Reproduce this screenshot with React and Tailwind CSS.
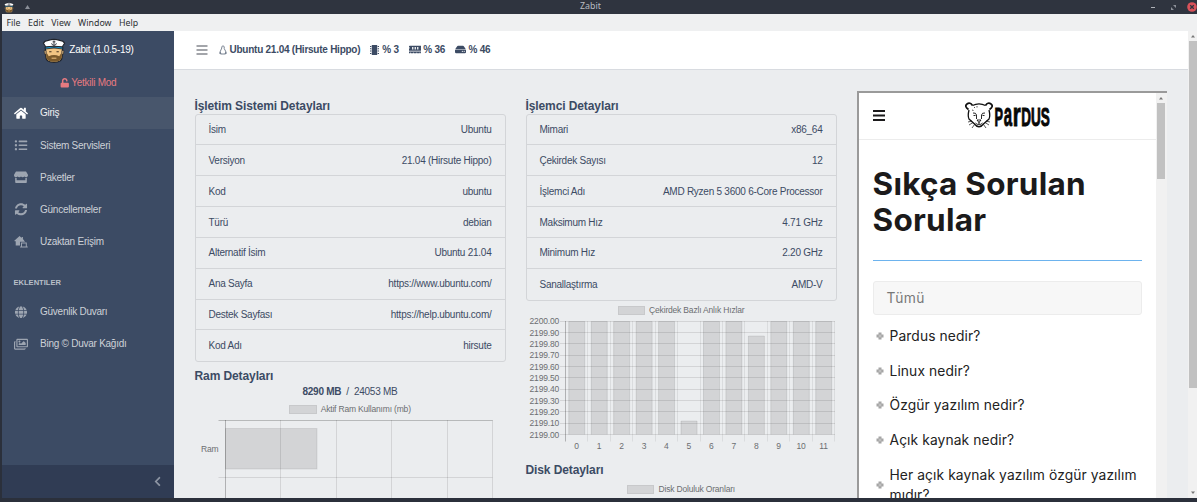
import React from "react";
import { FaHome, FaListUl, FaStore, FaSyncAlt, FaGlobe, FaRegImages, FaChevronLeft, FaUnlock, FaMemory, FaHdd } from "react-icons/fa";

function Captain({ className }) {
  return (
    <svg className={className} viewBox="0 0 24 26">
      <path d="M3 10 L3.500 20 Q4 25.300 12 25.300 Q20 25.300 20.500 20 L21 10Z" fill="#f2c583" stroke="#20242c" strokeWidth="1.300" />
      <path d="M1.700 13h2v4h-1.500ZM22.300 13h-2v4h1.500Z" fill="#f2c583" stroke="#20242c" strokeWidth=".7" />
      <path d="M3.900 16.500 5 16.500 6.500 19 Q12 16.500 17.500 19 L19 16.500h1.100L20 20.500Q19 24.800 12 24.800 Q5 24.800 4 20.500Z" fill="#7b5a2c" />
      <path d="M9.500 21h5" stroke="#f2c583" strokeWidth="1" />
      <path d="M7 14.300h2.400M14.600 14.300H17" stroke="#3a2c1c" strokeWidth="1" />
      <path d="M3 8.500h18v3q-9-2.500-18 0Z" fill="#1b9ad2" stroke="#20242c" strokeWidth=".8" />
      <path d="M1 5.500 Q2 3 6 2.500 Q12 .3 18 2.500 Q22 3 23 5.500 L20.500 9.300 Q12 7.800 3.500 9.300Z" fill="#fff" stroke="#20242c" strokeWidth="1.200" />
      <path d="M12 2.500v5M10.500 4h3M9.500 5.500q.5 2.200 2.500 2.200t2.500-2.200" fill="none" stroke="#20242c" strokeWidth=".9" />
    </svg>
  );
}

function RemoteHome({ className }) {
  return (
    <svg className={className} viewBox="0 0 14 13" fill="currentColor">
      <path d="M5.500 0 0 5l.8.800L1.500 5.200V10H6V6h5.200L9 3.200V1H7.700v1Z" />
      <path fillRule="evenodd" d="M7 6.800h6v4.200h1v1H6v-1h1Zm1 1V11h4V7.800Z" />
    </svg>
  );
}

const nav = [
  ["Giriş", FaHome, true],
  ["Sistem Servisleri", FaListUl],
  ["Paketler", FaStore],
  ["Güncellemeler", FaSyncAlt],
  ["Uzaktan Erişim", RemoteHome],
];
const plugins = [
  ["Güvenlik Duvarı", FaGlobe],
  ["Bing © Duvar Kağıdı", FaRegImages],
];

function NavItem({ item: [label, Icon, active] }) {
  return (
    <div className={"flex h-[32.200px] items-center pl-[12px] " + (active ? "bg-[#48566c] text-white" : "text-[#9da5b1]")}>
      <Icon className="h-[12.500px] w-[14px]" />
      <span className={"ml-[12px] pt-[0.500px] " + (active ? "text-[#f0f1f3]" : "text-[#cdd1d7]")}>{label}</span>
    </div>
  );
}

function Sidebar() {
  return (
    <aside className="flex w-[172px] shrink-0 flex-col bg-[#3c4b64]">
      <div className="flex h-[38px] items-center justify-center gap-[3px] text-white">
        <Captain className="h-[25px] w-[24px]" />
        <span>Zabit (1.0.5-19)</span>
      </div>
      <div className="flex h-[28px] items-center justify-center gap-[2px] text-[#e77a80]">
        <FaUnlock className="h-[9.500px] w-[9.500px]" />
        <span>Yetkili Mod</span>
      </div>
      {nav.map((n) => <NavItem key={n[0]} item={n} />)}
      <div className="flex h-[38px] items-center pt-[12px] pl-[11.500px] text-[7.550px] font-bold tracking-normal text-[#b9bfc8]">EKLENTILER</div>
      {plugins.map((n) => <NavItem key={n[0]} item={n} />)}
      <div className="mt-auto flex h-[33.500px] items-center justify-end bg-[#303c54] pr-[12px] text-[#8d95a3]">
        <FaChevronLeft className="h-[11px] w-[9px]" />
      </div>
    </aside>
  );
}

function Header() {
  return (
    <header className="flex h-[38.500px] shrink-0 items-center border-b border-[#d8dbe0] bg-white pl-[22px] font-bold text-[#3c4b64]">
      <svg className="h-[10px] w-[12px]" viewBox="0 0 12 10"><path d="M.5 1h11M.5 5h11M.5 9h11" stroke="#85888f" strokeWidth="1.600" /></svg>
      <svg className="ml-[11px] h-[10px] w-[8px]" viewBox="0 0 8 10" fill="none" stroke="#5b6779" strokeWidth=".8"><path d="M2.800 3V1.600Q4 0 5.200 1.600V3.500L7 7 6 9H2L1 7ZM2 9 .5 8.300 1.500 7M6 9l1.500-.7L6.500 7" /></svg>
      <span className="ml-[2.500px] pt-[0.500px]">Ubuntu 21.04 (Hirsute Hippo)</span>
      <svg className="ml-[10px] h-[10px] w-[9px]" viewBox="0 0 9 10" fill="currentColor"><path d="M1.800 0h5.400v10H1.800ZM0 1h1.300v1H0Zm0 2.300h1.300v1H0Zm0 2.300h1.300v1H0Zm0 2.300h1.300v1H0ZM7.700 1H9v1H7.700Zm0 2.300H9v1H7.700Zm0 2.300H9v1H7.700Zm0 2.300H9v1H7.700Z" /></svg>
      <span className="ml-[3px] pt-[0.500px]">% 3</span>
      <FaMemory className="ml-[10px] h-[11px] w-[12.500px]" />
      <span className="ml-[2px] pt-[0.500px]">% 36</span>
      <FaHdd className="ml-[10px] h-[11px] w-[11px]" />
      <span className="ml-[2.500px] pt-[0.500px]">% 46</span>
    </header>
  );
}

const osRows = [
  ["İsim", "Ubuntu"],
  ["Versiyon", "21.04 (Hirsute Hippo)"],
  ["Kod", "ubuntu"],
  ["Türü", "debian"],
  ["Alternatif İsim", "Ubuntu 21.04"],
  ["Ana Sayfa", "https://www.ubuntu.com/"],
  ["Destek Sayfası", "https://help.ubuntu.com/"],
  ["Kod Adı", "hirsute"],
];
const cpuRows = [
  ["Mimari", "x86_64"],
  ["Çekirdek Sayısı", "12"],
  ["İşlemci Adı", "AMD Ryzen 5 3600 6-Core Processor"],
  ["Maksimum Hız", "4.71 GHz"],
  ["Minimum Hız", "2.20 GHz"],
  ["Sanallaştırma", "AMD-V"],
];

function Details({ rows }) {
  return (
    <div className="divide-y divide-[#d3d5d8] rounded-[3px] border border-[#d3d5d8]">
      {rows.map(([k, v]) => (
        <div key={k} className="flex h-[30.850px] items-center justify-between px-[13px] pt-[1.300px]">
          <span>{k}</span>
          <span>{v}</span>
        </div>
      ))}
    </div>
  );
}

function Title({ children }) {
  return <h5 className="text-[12px] leading-[14px] font-bold tracking-[-0.100px]">{children}</h5>;
}

function Legend({ children }) {
  return (
    <div className="flex h-[9px] items-center justify-center gap-[4px] text-[8.500px] leading-[9px] tracking-[-0.180px] text-[#6c6e71]">
      <span className="h-[9px] w-[27.500px] border border-black/5 bg-black/10" />
      <span>{children}</span>
    </div>
  );
}

function RamChart() {
  return (
    <svg className="block h-[90px] w-[311px] shrink-0 tracking-[-0.180px]" viewBox="195 418 311 90" fontSize="8.500" fill="#6c6e71">
      <path d="M218.500 420.500H492.500" stroke="#000" strokeOpacity=".22" />
      <path d="M280.500 420V508M336.500 420V508M391.500 420V508M447.500 420V508M492.500 420V508M218.500 477.500H492.500" stroke="#000" strokeOpacity=".1" />
      <path d="M225.500 420V508" stroke="#000" strokeOpacity=".25" />
      <rect x="225.500" y="428.500" width="91.500" height="40.500" fill="#000" fillOpacity=".1" stroke="#000" strokeOpacity=".08" />
      <text x="218.500" y="451.500" textAnchor="end">Ram</text>
    </svg>
  );
}

const levels = [321.5, 321.5, 321.5, 321.5, 321.5, 421, 321.5, 321.5, 336, 321.5, 321.5, 321.5];

function CoreChart() {
  return (
    <svg className="block h-[136px] w-[311px] shrink-0 tracking-[-0.180px]" viewBox="526 316 311 136" fontSize="8.500" fill="#6c6e71">
      {Array.from({ length: 11 }, (_, i) => (
        <g key={i}>
          <path d={`M560 ${Math.floor(321.3 + i * 11.33) + 0.5}H835`} stroke="#000" strokeOpacity=".1" />
          <text x="559" y={324.3 + i * 11.33} textAnchor="end">{(2200 - i / 10).toFixed(2)}</text>
        </g>
      ))}
      {levels.map((top, i) => (
        <g key={i}>
          <path d={`M${Math.floor(565.3 + (i + 1) * 22.45) + 0.5} 321V441.500`} stroke="#000" strokeOpacity=".07" />
          <rect x={568.6 + i * 22.45} y={top} width="16.300" height={434.5 - top} fill="#000" fillOpacity=".1" />
          <path d={`M${568.8 + i * 22.45} 434.500V${top}h16v${434.5 - top}`} fill="none" stroke="#000" strokeOpacity=".08" />
          <text x={576.6 + i * 22.45} y="448.800" textAnchor="middle">{i}</text>
        </g>
      ))}
      <path d="M565.500 321V441.500" stroke="#000" strokeOpacity=".25" />
    </svg>
  );
}

function PardusLogo() {
  return (
    <div className="flex items-center gap-[2px]">
      <svg className="h-[27px] w-[28px]" viewBox="0 0 28 27" fill="none" stroke="#111" strokeWidth="1.300">
        <path d="M7.500 3.500Q14 .2 20.500 3.500M4 8Q2.500 14 4 17L9 21.500Q14 28 19 21.500L24 17Q25.500 14 24 8" />
        <path d="M7.500 3.500Q5-.2 2 2T3.500 7.500M20.500 3.500Q23-.2 26 2T24.500 7.500" strokeWidth="1.700" />
        <path d="M8 11q3-.5 3.500 2v4M20 11q-3-.5-3.500 2v4M8.500 13.500h2M17.500 13.500h2M12 18h4L14 20.500ZM14 20v2.500M10.500 21q1.500 2 3.500 1.300 2 .7 3.500-1.300" strokeWidth=".9" />
        <path d="M3 20l4-1M4 23l4-2.500M7 26l2.500-3.500M25 20l-4-1M24 23l-4-2.500M21 26l-2.500-3.500M9 5l1 1M12 4v1.500M7 8l1.500.5" strokeWidth=".7" />
      </svg>
      <svg className="h-[26px] w-[56px] overflow-visible" viewBox="0 0 56 26" fontWeight="700" fill="#080808" stroke="#080808" strokeWidth="1">
        <text transform="translate(-.5 22.500) scale(.49 1)" fontSize="26">P</text>
        <text transform="translate(8.800 22.500) scale(.44 1)" fontSize="34">a</text>
        <text transform="translate(17.800 22.500) scale(.6 1)" fontSize="34">r</text>
        <text transform="translate(26.200 22.500) scale(.52 1)" fontSize="26">DUS</text>
      </svg>
    </div>
  );
}

const faq = ["Pardus nedir?", "Linux nedir?", "Özgür yazılım nedir?", "Açık kaynak nedir?"];

function Plus() {
  return <svg className="h-[8px] w-[8px] shrink-0" viewBox="0 0 8 8"><path d="M2.500.5h3v2h2v3h-2v2h-3v-2h-2v-3h2Z" fill="#a5a5a5" /><path d="M4 2.500v3M2.500 4h3" stroke="#cfcfcf" strokeWidth=".8" /></svg>;
}

function PardusFrame() {
  return (
    <div className="flex h-[411px] w-[310px] shrink-0 border-t-2 border-l-2 border-[#9a9a9a] bg-white font-['Inter',sans-serif] tracking-[0.100px] text-[#1b1a1b]">
      <div className="w-[297.500px]">
        <div className="flex h-[47px] items-center border-b border-[#ececec] pl-[14px]">
          <svg className="h-[11px] w-[12px]" viewBox="0 0 12 11"><path d="M0 1h12M0 5.500h12M0 10h12" stroke="#1b1a1b" strokeWidth="1.900" /></svg>
          <div className="ml-[80px] font-['Liberation_Sans',sans-serif] tracking-normal"><PardusLogo /></div>
        </div>
        <div className="px-[14px]">
          <h1 className="mt-[26.500px] text-[31.500px] leading-[35.500px] font-bold tracking-[0.250px] whitespace-nowrap">Sıkça Sorulan<br />Sorular</h1>
          <div className="mt-[22.500px] h-px bg-[#6db3ee]" />
          <div className="mt-[20px] flex h-[34px] items-center rounded-[3px] border border-[#ececec] bg-[#f7f7f7] pl-[13px] text-[13.800px] tracking-[0.450px] text-[#777]">Tümü</div>
          <div className="mt-[4px] text-[13.800px] text-[#222]">
            {faq.map((q) => (
              <div key={q} className="flex h-[34.800px] items-center gap-[6px] pl-[3px]"><Plus /><span className="tracking-[0.110px]">{q}</span></div>
            ))}
            <div className="flex items-center gap-[6px] pt-[7px] pl-[3px] leading-[20px] whitespace-nowrap"><Plus /><span>Her açık kaynak yazılım özgür yazılım<br />mıdır?</span></div>
          </div>
        </div>
      </div>
      <div className="flex flex-1 flex-col items-center bg-[#f1f1f1]">
        <Arrow className="h-[10px] w-[6px]" />
        <div className="h-[76px] w-[8px] bg-[#c1c1c1]" />
      </div>
    </div>
  );
}

function Arrow({ className }) {
  return <svg className={className} viewBox="0 0 6 10"><path d="M1 6.500 3 4l2 2.500Z" fill="#777" /></svg>;
}

function TitleBar() {
  return (
    <div className="flex h-[14px] shrink-0 items-center bg-[#2f343f] text-[#b9bcc2]">
      <Captain className="ml-[4px] h-[11px] w-[10px]" />
      <svg className="ml-[11px] h-[4px] w-[5px]" viewBox="0 0 5 4"><path d="M0 4 2.500 0 5 4Z" fill="#8b8f98" /></svg>
      <div className="ml-[550px] pb-[2px] font-['Noto_Sans',sans-serif] text-[8.800px] leading-[12px] tracking-normal">Zabit</div>
      <div className="ml-auto flex items-center">
        <div className="mr-[16px] h-px w-[4px] bg-[#b0b3b9]" />
        <svg className="mr-[11px] h-[5px] w-[5px]" viewBox="0 0 5 5"><path d="M2 0h3v3ZM0 2v3h3Z" fill="#8b8f98" /></svg>
        <svg className="h-[10px] w-[10px]" viewBox="0 0 10 10"><circle cx="5" cy="5" r="4.800" fill="#d9525a" /><path d="m3.200 3.200 3.600 3.600m0-3.600L3.200 6.800" stroke="#2f343f" strokeWidth="1.300" /></svg>
      </div>
    </div>
  );
}

export default function App() {
  return (
    <div className="flex h-[502px] w-[1197px] flex-col overflow-hidden bg-[#2b303b] font-['Liberation_Sans',Arial,sans-serif] text-[10px] leading-[14px] tracking-[-0.250px] text-[#3c4b64]">
      <TitleBar />
      <div className="ml-[2px] flex h-[17px] shrink-0 items-center gap-[7.500px] bg-[#eff0f1] pl-[4.500px] font-['Noto_Sans',sans-serif] text-[8.800px] tracking-normal text-[#2c2f33]">
        <span>File</span><span>Edit</span><span>View</span><span>Window</span><span>Help</span>
      </div>
      <div className="ml-[2px] flex h-[467px] shrink-0 overflow-hidden">
        <Sidebar />
        <div className="flex min-w-0 flex-1 flex-col overflow-hidden bg-[#ebedef]">
          <Header />
          <main className="flex h-[428px] gap-[20px] pl-[20.500px]">
            <section className="w-[311px] shrink-0 pt-[29px]">
              <Title>İşletim Sistemi Detayları</Title>
              <div className="mt-[1px]"><Details rows={osRows} /></div>
              <div className="mt-[7px]"><Title>Ram Detayları</Title></div>
              <div className="mt-[2px] text-center whitespace-pre"><b>8290 MB</b>{"  /  "}24053 MB</div>
              <div className="mt-[5.500px]"><Legend>Aktif Ram Kullanımı (mb)</Legend></div>
              <div className="mt-[4px]"><RamChart /></div>
            </section>
            <section className="w-[311px] shrink-0 pt-[29px]">
              <Title>İşlemci Detayları</Title>
              <div className="mt-[1px]"><Details rows={cpuRows} /></div>
              <div className="mt-[5.500px]"><Legend>Çekirdek Bazlı Anlık Hızlar</Legend></div>
              <div className="mt-[1px]"><CoreChart /></div>
              <div className="mt-[10.500px]"><Title>Disk Detayları</Title></div>
              <div className="mt-[8px]"><Legend>Disk Doluluk Oranları</Legend></div>
            </section>
            <section className="pt-[21px]"><PardusFrame /></section>
          </main>
        </div>
        <div className="flex w-[9px] shrink-0 flex-col items-center bg-[#f1f1f1]">
          <Arrow className="h-[10px] w-[6px] shrink-0" />
          <div className="h-[347px] w-[8px] shrink-0 bg-[#c1c1c1]" />
          <Arrow className="mt-auto h-[10px] w-[6px] shrink-0 rotate-180" />
        </div>
      </div>
    </div>
  );
}
